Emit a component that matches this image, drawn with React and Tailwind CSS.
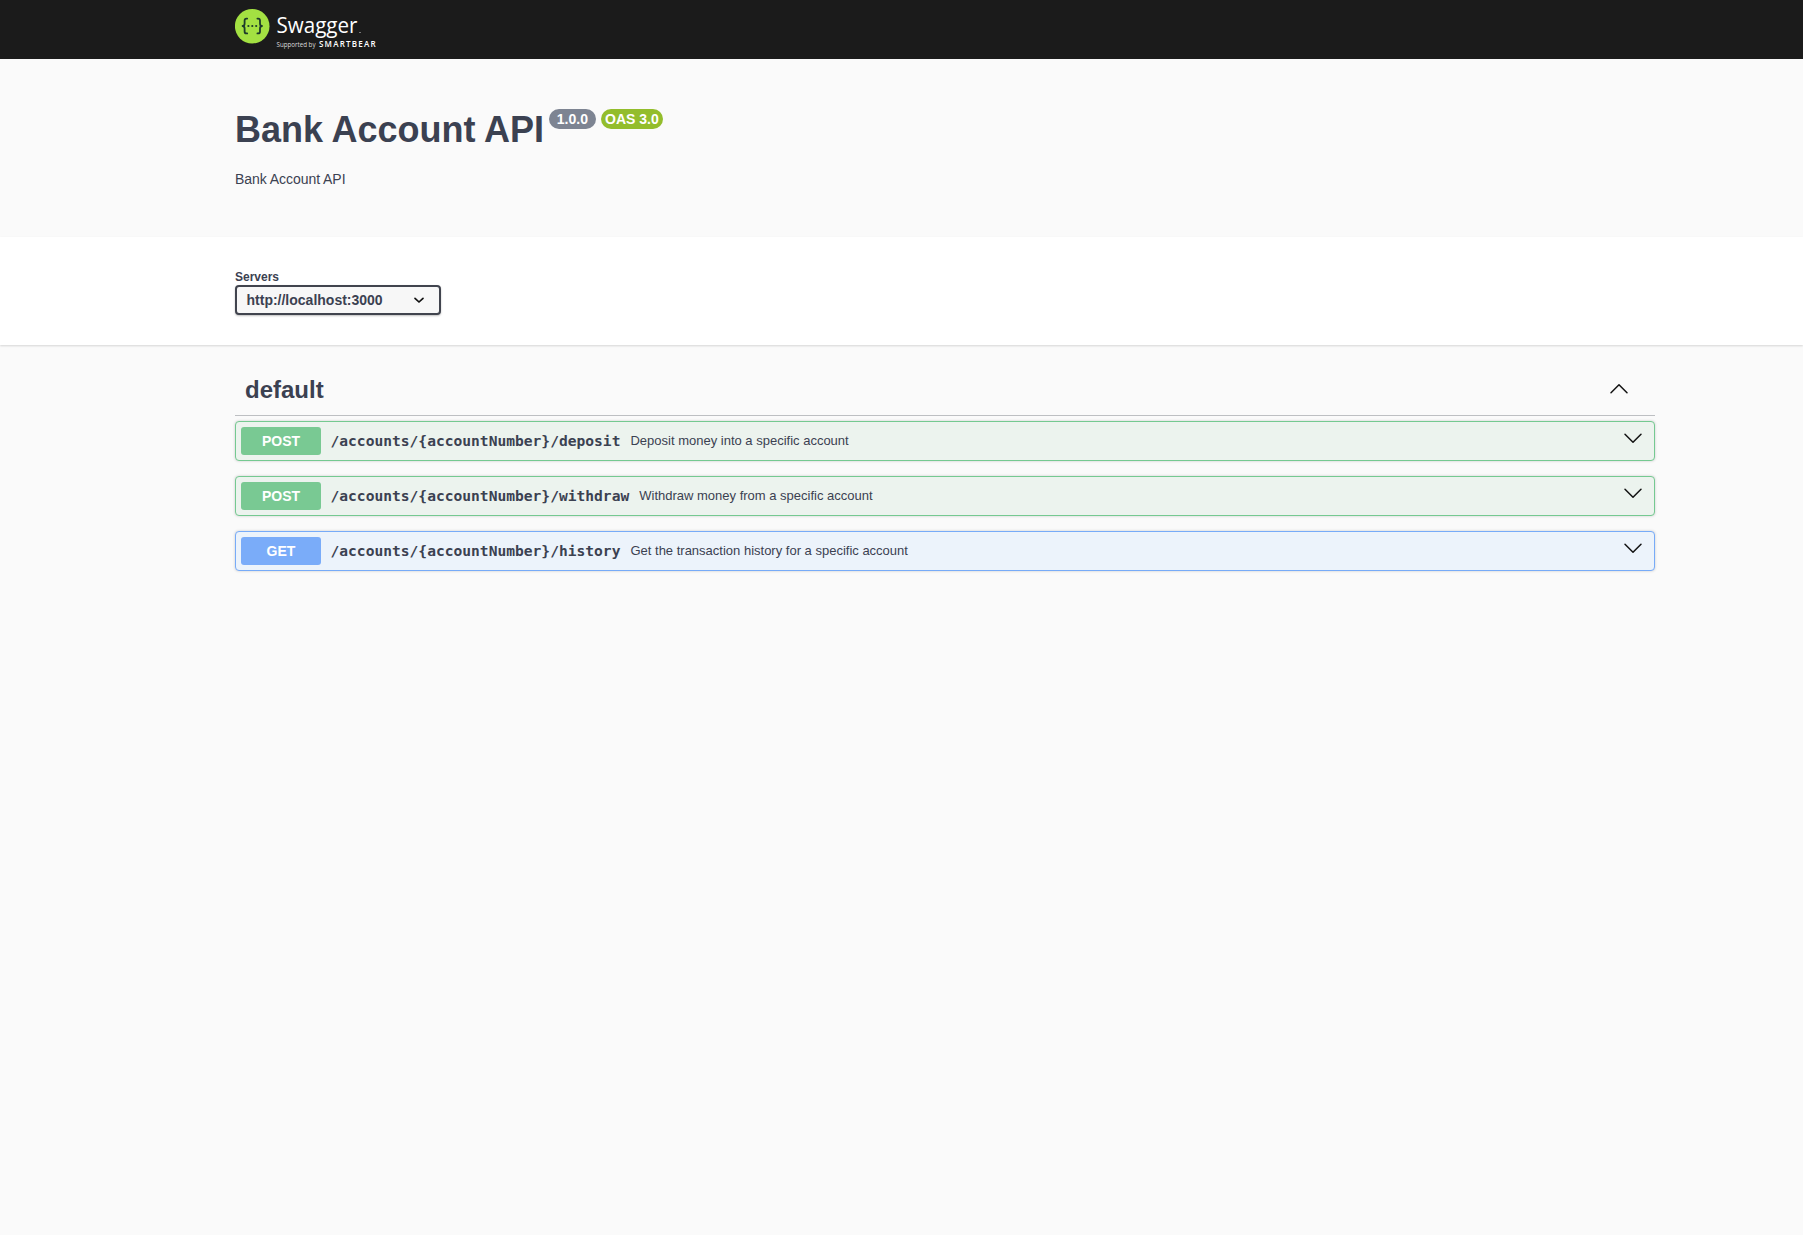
const GREEN = {
  box: 'border-[#75c991] bg-[#ecf3ee]',
  badge: 'bg-[#79c993]',
};
const BLUE = {
  box: 'border-[#77abf8] bg-[#ecf3fb]',
  badge: 'bg-[#7aacf9]',
};

const operations = [
  { method: 'POST', path: '/accounts/{accountNumber}/deposit', summary: 'Deposit money into a specific account', tone: GREEN },
  { method: 'POST', path: '/accounts/{accountNumber}/withdraw', summary: 'Withdraw money from a specific account', tone: GREEN },
  { method: 'GET', path: '/accounts/{accountNumber}/history', summary: 'Get the transaction history for a specific account', tone: BLUE },
];

function Chevron({ up = false, className = '' }) {
  return (
    <svg width="20" height="20" viewBox="0 0 20 20" fill="none" className={className}>
      <path
        d={up ? 'M2 13.7 10 5.7 18 13.7' : 'M2 6.3 10 14.3 18 6.3'}
        stroke="#111"
        strokeWidth="1.5"
        strokeLinecap="round"
        strokeLinejoin="round"
      />
    </svg>
  );
}

function Logo() {
  return (
    <svg width="150" height="59" viewBox="0 0 150 59" className="block">
      <circle cx="17.2" cy="26.2" r="17.3" fill="#a3e142" />
      <g fill="none" stroke="#1d3b2b" strokeWidth="1.8" strokeLinecap="round" strokeLinejoin="round">
        <path d="M12.2 18.6H11.4Q9.6 18.6 9.6 20.6V23.4Q9.6 26 7.6 26Q9.6 26 9.6 28.6V31.4Q9.6 33.4 11.4 33.4H12.2" />
        <path d="M22.4 18.6H23.2Q25 18.6 25 20.6V23.4Q25 26 27 26Q25 26 25 28.6V31.4Q25 33.4 23.2 33.4H22.4" />
      </g>
      <g fill="#1d3b2b">
        <circle cx="13.4" cy="26" r="1.1" />
        <circle cx="17.3" cy="26" r="1.1" />
        <circle cx="21.2" cy="26" r="1.1" />
      </g>
      <text x="41.5" y="33.3" fill="#fff" fontSize="22.5" textLength="81" lengthAdjust="spacingAndGlyphs" className="font-['Open_Sans',sans-serif]">Swagger</text>
      <rect x="124" y="32" width="2" height="1" fill="#777" />
      <text x="41.5" y="47.3" fill="#ddd" fontSize="6.2" textLength="39" lengthAdjust="spacingAndGlyphs" className="font-['Open_Sans',sans-serif]">Supported by</text>
      <text x="84" y="47" fill="#fff" fontSize="8" fontWeight="600" textLength="56.5" lengthAdjust="spacing" className="font-['Open_Sans',sans-serif]">SMARTBEAR</text>
    </svg>
  );
}

function Operation({ method, path, summary, tone }) {
  return (
    <div className={`flex h-10 items-center rounded-[4px] border pl-[5px] pr-[11px] shadow-[0_0_3px_rgba(0,0,0,0.19)] ${tone.box}`}>
      <span className={`flex h-7 w-20 items-center justify-center rounded-[3px] text-[14px] font-bold text-white ${tone.badge}`}>
        {method}
      </span>
      <span className="ml-[9.5px] whitespace-nowrap font-['DejaVu_Sans_Mono',monospace] text-[14.6px] font-bold leading-5">{path}</span>
      <span className="ml-[10px] whitespace-nowrap text-[13px] leading-5">{summary}</span>
      <Chevron className="-mt-1.5 ml-auto" />
    </div>
  );
}

export default function App() {
  return (
    <div className="min-h-screen bg-[#fafafa] font-['Liberation_Sans',Arial,sans-serif] text-[#3b4151]">
      <header className="h-[59px] bg-[#1b1b1b] pl-[235px]">
        <Logo />
      </header>

      <section className="h-[178px] pl-[235px] pt-[49px]">
        <div className="flex items-start">
          <h1 className="whitespace-nowrap text-[36px] font-bold leading-[44px] tracking-[-0.03px]">Bank Account API</h1>
          <span className="ml-[5px] mt-[1px] flex h-5 w-[47px] items-center justify-center rounded-full bg-[#7d8492] text-[14px] font-bold text-white">1.0.0</span>
          <span className="ml-[5px] mt-[1px] flex h-5 w-[62px] items-center justify-center whitespace-nowrap rounded-full bg-[#93bd2c] text-[14px] font-bold text-white">OAS 3.0</span>
        </div>
        <p className="mt-[17px] text-[14px] leading-5 tracking-[-0.05px]">Bank Account API</p>
      </section>

      <section className="h-[108px] bg-white pl-[235px] pt-[32px] shadow-[0_1px_2px_rgba(0,0,0,0.15)]">
        <div className="text-[12px] font-bold leading-4">Servers</div>
        <div className="flex h-[30px] w-[206px] items-center justify-between rounded-[4px] border-2 border-[#41444e] bg-[#f7f7f7] pl-[9.5px] pr-[14px] text-[14px] font-bold shadow-[0_1px_2px_rgba(0,0,0,0.25)]">
          <span>http://localhost:3000</span>
          <svg width="12" height="12" viewBox="0 0 12 12" fill="none">
            <path d="M2 4.3 6 8 10 4.3" stroke="#111" strokeWidth="1.7" strokeLinecap="round" strokeLinejoin="round" />
          </svg>
        </div>
      </section>

      <main className="ml-[235px] w-[1420px] pt-[20px]">
        <div className="flex h-[51px] items-center justify-between border-b border-[#bdbfc2] pl-[10px] pr-[26px]">
          <h2 className="text-[24px] font-bold leading-[30px]">default</h2>
          <Chevron up className="-mt-0.5" />
        </div>
        <div className="mt-[5px] flex flex-col gap-[15px]">
          {operations.map((op) => (
            <Operation key={op.path} {...op} />
          ))}
        </div>
      </main>
    </div>
  );
}
